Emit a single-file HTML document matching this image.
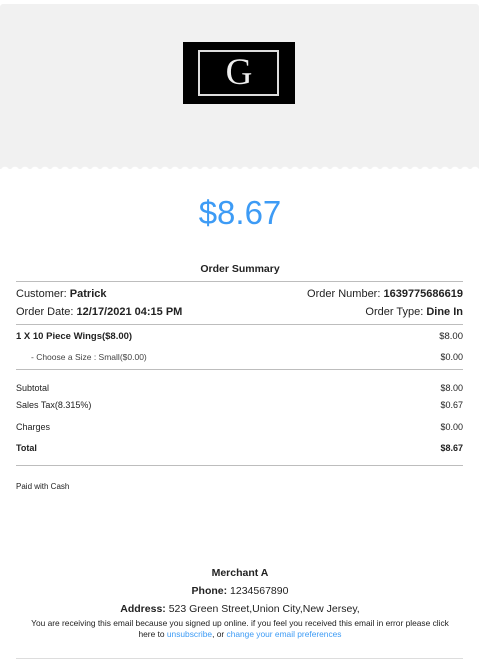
<!DOCTYPE html>
<html><head><meta charset="utf-8"><style>
*{margin:0;padding:0;box-sizing:border-box}
body{width:480px;height:665px;background:#fff;font-family:"Liberation Sans",Arial,sans-serif;color:#222;position:relative;overflow:hidden}
.a{position:absolute;white-space:nowrap}
.hdr{position:absolute;left:0;top:4px;width:479px;height:165px;background:#f1f1f1;border-radius:3px 3px 0 0}
.scal{position:absolute;left:0;top:161px;width:480px;height:10px;background:radial-gradient(circle at 5px 10px,#fff 4px,transparent 4.5px) 0 0/10px 10px repeat-x}
.hr{position:absolute;left:16px;width:447px;height:1px;background:#bdbdbd}
.r{right:17px;text-align:right}
.l{left:16px}
b{font-weight:bold}
.s{font-size:9px}
.m{font-size:10.5px}
</style></head><body>
<div class="hdr"></div>
<div class="scal"></div>
<div class="a" style="left:183px;top:42px;width:112px;height:62px;background:#000">
 <div style="position:absolute;left:15px;top:8px;width:81px;height:46px;border:2px solid #ddd"></div>
 <div style="position:absolute;left:0;width:112px;top:13px;text-align:center;color:#eee;font-family:'Liberation Serif',serif;font-size:37px;line-height:36px">G</div>
</div>
<div class="a" style="left:0;width:480px;text-align:center;top:194px;font-size:33px;color:#3d9bf5">$8.67</div>
<div class="a" style="left:0;width:480px;text-align:center;top:263px;font-size:10.5px;font-weight:bold">Order Summary</div>
<div class="hr" style="top:281px"></div>
<div class="a l" style="top:288px;font-size:11px">Customer: <b>Patrick</b></div>
<div class="a r" style="top:288px;font-size:11px">Order Number: <b>1639775686619</b></div>
<div class="a l" style="top:306px;font-size:11px">Order Date: <b>12/17/2021 04:15 PM</b></div>
<div class="a r" style="top:306px;font-size:11px">Order Type: <b>Dine In</b></div>
<div class="hr" style="top:324px"></div>
<div class="a l" style="top:331px;font-weight:bold;font-size:9.5px">1 X 10 Piece Wings($8.00)</div>
<div class="a r" style="top:331px;font-size:9.5px">$8.00</div>
<div class="a s" style="left:31px;top:352px;color:#444;font-size:8.5px">- Choose a Size : Small($0.00)</div>
<div class="a r s" style="top:352px">$0.00</div>
<div class="hr" style="top:369px"></div>
<div class="a l s" style="top:383px">Subtotal</div><div class="a r s" style="top:383px">$8.00</div>
<div class="a l s" style="top:400px">Sales Tax(8.315%)</div><div class="a r s" style="top:400px">$0.67</div>
<div class="a l s" style="top:422px">Charges</div><div class="a r s" style="top:422px">$0.00</div>
<div class="a l s" style="top:443px;font-weight:bold">Total</div><div class="a r s" style="top:443px;font-weight:bold">$8.67</div>
<div class="hr" style="top:465px"></div>
<div class="a l" style="top:482px;font-size:8px">Paid with Cash</div>
<div style="position:absolute;left:0;width:480px;top:565px;text-align:center">
<div style="font-size:10.5px;font-weight:bold;line-height:17px">Merchant A</div>
<div style="font-size:10.5px;line-height:18px"><b>Phone:</b> 1234567890</div>
<div style="font-size:10.5px;line-height:18px"><b>Address:</b> 523 Green Street,Union City,New Jersey,</div>
<div style="font-size:8.4px;line-height:11px;padding:0 23px">You are receiving this email because you signed up online. if you feel you received this email in error please click here to <span style="color:#3d9bf5">unsubscribe</span>, or <span style="color:#3d9bf5">change your email preferences</span></div>
</div>
<div class="hr" style="top:658px;background:#ddd"></div>
</body></html>
